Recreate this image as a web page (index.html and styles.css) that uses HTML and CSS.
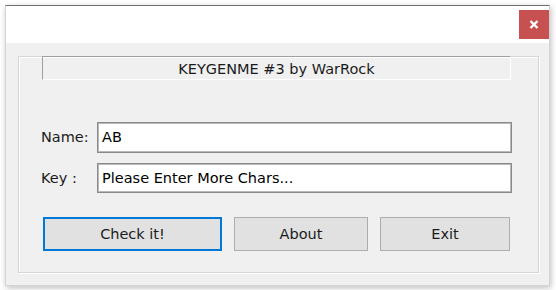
FILE: index.html
```html
<!DOCTYPE html>
<html>
<head>
<meta charset="utf-8">
<link rel="stylesheet" href="styles.css">
</head>
<body>
<div class="window">
  <div class="titlebar">
    <div class="close">
      <svg width="10" height="9" viewBox="0 0 10 9"><path d="M1.5 1 L8.5 8 M8.5 1 L1.5 8" stroke="#fff" stroke-width="2.4" fill="none"/></svg>
    </div>
  </div>
  <div class="client">
    <div class="group">
      <div class="banner">KEYGENME #3 by WarRock</div>
      <div class="form">
        <label class="lbl">Name:</label>
        <div class="edit">AB</div>
        <label class="lbl">Key :</label>
        <div class="edit">Please Enter More Chars...</div>
      </div>
      <div class="buttons">
        <button class="btn btn-check">Check it!</button>
        <button class="btn btn-about">About</button>
        <button class="btn btn-exit">Exit</button>
      </div>
    </div>
  </div>
</div>
</body>
</html>
```
FILE: styles.css
```css
html, body {
  margin: 0;
  padding: 0;
  background: #ffffff;
}
body {
  width: 556px;
  height: 290px;
  overflow: hidden;
  font-family: "DejaVu Sans", Tahoma, sans-serif;
  font-size: 14.5px;
  color: #1b1b1b;
}
.window {
  margin: 5px 0 0 5px;
  width: 543px;
  height: 279px;
  border-top: 1px solid #6e6e6e;
  border-left: 1px solid #d4d4d4;
  border-right: 1px solid #d4d4d4;
  border-bottom: 1px solid #d4d4d4;
  box-shadow: 1px 2px 6px rgba(0,0,0,0.25);
  display: flex;
  flex-direction: column;
  background: #f0f0f0;
}
.titlebar {
  height: 37px;
  background: #ffffff;
  display: flex;
  justify-content: flex-end;
  align-items: flex-start;
  padding: 4px 0 0 0;
  box-sizing: border-box;
}
.close {
  width: 30px;
  height: 29px;
  background: #c75050;
  display: flex;
  align-items: center;
  justify-content: center;
}
.client {
  flex: 1;
  padding: 13px 10px 12px 12px;
  display: flex;
}
.group {
  flex: 1;
  border: 1px solid #d6d6d6;
  box-shadow: inset 1px 1px 0 #ffffff, 1px 1px 0 #ffffff;
  display: flex;
  flex-direction: column;
}
.banner {
  margin: -1px 0 0 23px;
  width: 469px;
  height: 24px;
  box-sizing: border-box;
  border-top: 1px solid #a0a0a0;
  border-left: 1px solid #a0a0a0;
  border-right: 1px solid #ffffff;
  border-bottom: 1px solid #ffffff;
  display: flex;
  align-items: center;
  justify-content: center;
  padding-top: 1px;
}
.form {
  margin: 42px 0 0 22px;
  display: grid;
  grid-template-columns: 56px 415px;
  grid-template-rows: 31px 30px;
  row-gap: 10px;
  align-items: center;
}
.lbl {
  padding-bottom: 1px;
}
.edit {
  height: 100%;
  box-sizing: border-box;
  background: #ffffff;
  border: 1px solid #8a8a8a;
  box-shadow: inset 0 0 0 1px #b9b9b9;
  display: flex;
  align-items: center;
  padding: 0 0 1px 4px;
  color: #000;
}
.buttons {
  margin: 24px 0 0 24px;
  display: flex;
  gap: 12px;
}
.btn {
  height: 34px;
  box-sizing: border-box;
  background: #e1e1e1;
  border: 1px solid #adadad;
  font-family: inherit;
  font-size: inherit;
  color: #1b1b1b;
  padding: 0;
}
.btn-check {
  width: 179px;
  border: 2px solid #0078d7;
}
.btn-about {
  width: 134px;
}
.btn-exit {
  width: 130px;
}
```
